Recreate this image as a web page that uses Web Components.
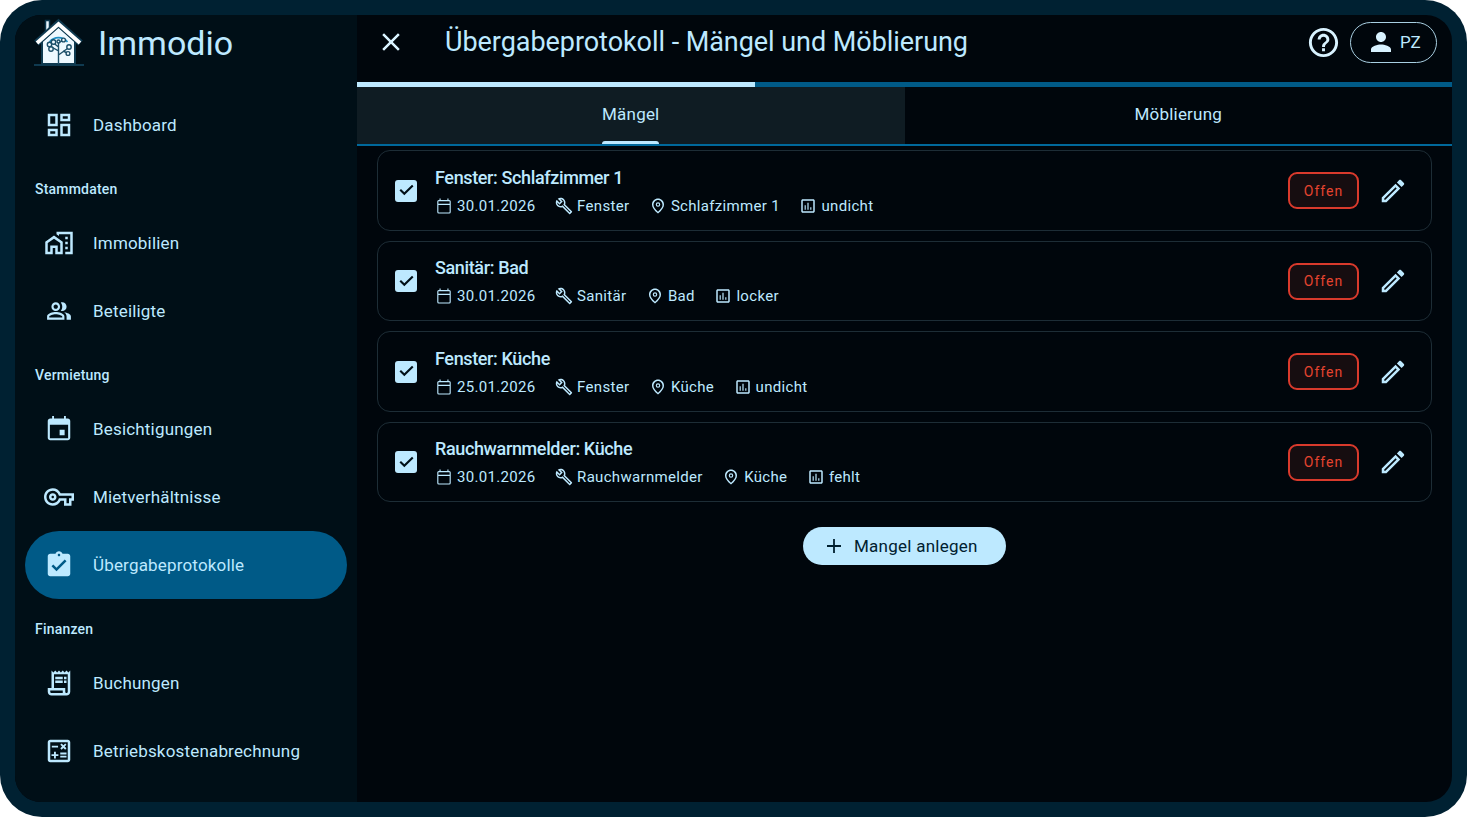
<!DOCTYPE html>
<html lang="de">
<head>
<meta charset="utf-8">
<title>Immodio</title>
<style>
  html, body { margin: 0; height: 100%; background: #fff; }
  body { font-family: Roboto, "Liberation Sans", sans-serif; overflow: hidden; }
</style>
</head>
<body>
<im-app>
  <im-sidebar slot="side">
    <im-nav icon="dashboard">Dashboard</im-nav>
    <im-section>Stammdaten</im-section>
    <im-nav icon="home_work">Immobilien</im-nav>
    <im-nav icon="people" icon-size="26">Beteiligte</im-nav>
    <im-section>Vermietung</im-section>
    <im-nav icon="event">Besichtigungen</im-nav>
    <im-nav icon="key">Mietverhältnisse</im-nav>
    <im-nav icon="assignment" active>Übergabeprotokolle</im-nav>
    <im-section>Finanzen</im-section>
    <im-nav icon="receipt">Buchungen</im-nav>
    <im-nav icon="calculate">Betriebskostenabrechnung</im-nav>
  </im-sidebar>
  <im-topbar>Übergabeprotokoll - Mängel und Möblierung</im-topbar>
  <im-progress value="36.36"></im-progress>
  <im-tabs></im-tabs>
  <im-list>
    <im-card title="Fenster: Schlafzimmer 1" date="30.01.2026" trade="Fenster" room="Schlafzimmer 1" state="undicht"></im-card>
    <im-card title="Sanitär: Bad" date="30.01.2026" trade="Sanitär" room="Bad" state="locker"></im-card>
    <im-card title="Fenster: Küche" date="25.01.2026" trade="Fenster" room="Küche" state="undicht"></im-card>
    <im-card title="Rauchwarnmelder: Küche" date="30.01.2026" trade="Rauchwarnmelder" room="Küche" state="fehlt"></im-card>
    <im-add-button>Mangel anlegen</im-add-button>
  </im-list>
</im-app>

<script>
// material style icons, 24 unit box
const ICONS = {
  dashboard: '<path d="M19 5v2h-4V5h4M9 5v6H5V5h4m10 8v6h-4v-6h4M9 17v2H5v-2h4M21 3h-8v6h8V3zM11 3H3v10h8V3zm10 8h-8v10h8V11zm-10 4H3v6h8v-6z"/>',
  home_work: '<path d="M17 7h2v2h-2zM17 11h2v2h-2zM17 15h2v2h-2zM1 11v10h6v-5h2v5h6V11L8 6l-7 5zm12 8h-2v-5H5v5H3v-7l5-3.5 5 3.5v7zM10 3v1.97l2 1.43V5h9v14h-4v2h6V3z"/>',
  people: '<path d="M16.67 13.13C18.04 14.06 19 15.32 19 17v3h4v-3c0-2.18-3.57-3.47-6.33-3.87zM15 12c2.21 0 4-1.79 4-4s-1.79-4-4-4c-.47 0-.91.1-1.33.24C14.5 5.27 15 6.58 15 8s-.5 2.73-1.33 3.76c.42.14.86.24 1.33.24zM9 12c2.21 0 4-1.79 4-4s-1.79-4-4-4-4 1.79-4 4 1.79 4 4 4zm0-6c1.1 0 2 .9 2 2s-.9 2-2 2-2-.9-2-2 .9-2 2-2zM9 13c-2.67 0-8 1.34-8 4v3h16v-3c0-2.66-5.33-4-8-4zm6 5H3v-.99C3.2 16.29 6.3 15 9 15s5.8 1.29 6 2v1z"/>',
  event: '<path d="M16.500 12.500h-4v4.500h4zM16 1.500v2H8v-2H6.500v2H5c-1.110 0-2 .9-2 2V19c0 1.100.89 2 2 2h14c1.100 0 2-.9 2-2V5.500c0-1.100-.9-2-2-2h-1.500v-2zm3.300 17.800H4.700V8.500h14.600z"/>',
  key: '<path d="M22 19h-6v-4h-2.68c-1.14 2.42-3.6 4-6.32 4-3.86 0-7-3.14-7-7s3.14-7 7-7c2.72 0 5.17 1.58 6.32 4H24v6h-2v4zm-4-2h2v-4h2v-2H11.94l-.23-.67C11.01 8.34 9.11 7 7 7c-2.76 0-5 2.24-5 5s2.24 5 5 5c2.11 0 4.01-1.34 4.71-3.33l.23-.67H18v4zM7 15c-1.65 0-3-1.35-3-3s1.35-3 3-3 3 1.35 3 3-1.35 3-3 3zm0-4c-.55 0-1 .45-1 1s.45 1 1 1 1-.45 1-1-.45-1-1-1z"/>',
  assignment: '<path d="M19 3h-4.18C14.4 1.84 13.3 1 12 1c-1.3 0-2.4.84-2.82 2H5c-1.1 0-2 .9-2 2v14c0 1.1.9 2 2 2h14c1.1 0 2-.9 2-2V5c0-1.1-.9-2-2-2zm-7 0c.55 0 1 .45 1 1s-.45 1-1 1-1-.45-1-1 .45-1 1-1zm-2 14l-4-4 1.41-1.41L10 14.17l6.59-6.59L18 9l-8 8z"/>',
  receipt: '<path d="M19.5 3.5 18 2l-1.5 1.5L15 2l-1.5 1.5L12 2l-1.5 1.5L9 2 7.5 3.5 6 2v14H3v3c0 1.66 1.34 3 3 3h12c1.66 0 3-1.34 3-3V2l-1.5 1.5zM15 20H6c-.55 0-1-.45-1-1v-1h10v2zm4-1c0 .55-.45 1-1 1s-1-.45-1-1v-3H8V5h11v14z"/><path d="M9 7h6v2H9zM16 7h2v2h-2zM9 10h6v2H9zM16 10h2v2h-2z"/>',
  calculate: '<path d="M19 3H5c-1.1 0-2 .9-2 2v14c0 1.1.9 2 2 2h14c1.1 0 2-.9 2-2V5c0-1.1-.9-2-2-2zm0 16H5V5h14v14z"/><path d="M6.25 7.72h5v1.5h-5zM13 15.75h5v1.5h-5zM13 13.25h5v1.5h-5zM8 18h1.5v-2h2v-1.5h-2v-2H8v2H6V16h2zM14.09 10.95l1.41-1.41 1.41 1.41 1.06-1.06-1.41-1.42 1.41-1.41L16.97 6l-1.41 1.41L14.09 6l-1.06 1.06 1.41 1.41-1.41 1.42z"/>',
  close: '<path d="M19 6.41 17.59 5 12 10.59 6.41 5 5 6.41 10.59 12 5 17.59 6.41 19 12 13.41 17.59 19 19 17.59 13.41 12z"/>',
  help: '<path d="M11 18h2v-2h-2v2zm1-16C6.48 2 2 6.48 2 12s4.48 10 10 10 10-4.48 10-10S17.52 2 12 2zm0 18c-4.41 0-8-3.59-8-8s3.59-8 8-8 8 3.59 8 8-3.59 8-8 8zm0-14c-2.21 0-4 1.79-4 4h2c0-1.1.9-2 2-2s2 .9 2 2c0 2-3 1.75-3 5h2c0-2.25 3-2.5 3-5 0-2.21-1.79-4-4-4z"/>',
  person: '<path d="M12 12c2.21 0 4-1.79 4-4s-1.79-4-4-4-4 1.79-4 4 1.79 4 4 4zm0 2c-2.67 0-8 1.34-8 4v2h16v-2c0-2.66-5.33-4-8-4z"/>',
  calendar: '<path d="M19 4h-1V2h-1.500v2h-9V2H6v2H5a2 2 0 0 0-2 2v14a2 2 0 0 0 2 2h14a2 2 0 0 0 2-2V6a2 2 0 0 0-2-2zM5 5.500h14a.5.5 0 0 1 .5.5v3h-15V6a.5.5 0 0 1 .5-.5zm14 15H5a.5.5 0 0 1-.5-.5V10.500h15V20a.5.5 0 0 1-.5.5z"/>',
  build: '<path d="m22.61 18.99-9.08-9.08c.93-2.34.45-5.1-1.44-7C9.79.61 6.21.4 3.66 2.26L7.5 6.11 6.08 7.52 2.25 3.69C.39 6.23.6 9.82 2.9 12.110c1.86 1.86 4.57 2.35 6.89 1.48l9.11 9.11c.39.39 1.02.39 1.41 0l2.3-2.3c.4-.38.4-1.01 0-1.41zm-3 1.6-9.46-9.46c-.61.45-1.29.72-2 .82-1.36.2-2.79-.21-3.83-1.25C3.37 9.76 2.93 8.5 3 7.26l3.09 3.09 4.24-4.24-3.09-3.09c1.24-.07 2.49.37 3.44 1.31 1.08 1.08 1.49 2.57 1.24 3.96-.12.71-.42 1.37-.88 1.96l9.45 9.45-.88.88z"/>',
  place: '<path d="M12 2c-4.200 0-8 3.220-8 8.200 0 3.320 2.670 7.250 8 11.800 5.330-4.550 8-8.480 8-11.800C20 5.220 16.200 2 12 2zm0 17.800c-4.050-3.700-6-6.800-6-9.140C6 6.830 8.650 4 12 4s6 2.830 6 6.660c0 2.340-1.950 5.440-6 9.140z"/><path d="M12 7a3 3 0 1 0 0 6 3 3 0 0 0 0-6zm0 4.500a1.500 1.500 0 1 1 0-3 1.500 1.500 0 0 1 0 3z"/>',
  chart: '<path d="M19 3H5c-1.100 0-2 .9-2 2v14c0 1.100.9 2 2 2h14c1.100 0 2-.9 2-2V5c0-1.100-.9-2-2-2zm0 16H5V5h14v14z"/><path d="M7.500 11H9v6H7.500zM11.200 7.500h1.600V17h-1.600zM15 13.500h1.500V17H15z"/>',
  edit: '<path d="M3 17.250V21h3.750L17.810 9.940l-3.750-3.750L3 17.250zM5.920 19H5v-.92l9.060-9.060.92.92L5.920 19zM20.710 5.630l-2.340-2.340c-.2-.2-.45-.29-.71-.29s-.51.1-.7.29l-1.830 1.830 3.750 3.750 1.830-1.830c.39-.39.39-1.020 0-1.410z"/>',
  add: '<path d="M19 12.900h-6.100V19h-1.800v-6.100H5v-1.800h6.100V5h1.800v6.100H19z"/>'
};

class ImIcon extends HTMLElement {
  connectedCallback() {
    const size = this.getAttribute("size") || 24;
    this.attachShadow({ mode: "open" }).innerHTML = `
      <style>
        :host { display: inline-flex; flex: none; width: ${size}px; height: ${size}px; }
        svg { width: 100%; height: 100%; fill: currentColor; display: block; }
      </style>
      <svg viewBox="0 0 24 24">${ICONS[this.getAttribute("name")] || ""}</svg>`;
  }
}

class ImApp extends HTMLElement {
  constructor() {
    super();
    this.attachShadow({ mode: "open" }).innerHTML = `
      <style>
        :host {
          display: block; box-sizing: border-box; width: 1467px; height: 817px;
          padding: 15px; background: #002132; border-radius: 42px;
          color: #bde9ff; font-family: Roboto, "Liberation Sans", sans-serif;
        }
        .screen {
          height: 100%; display: flex; overflow: hidden;
          border-radius: 26px; background: #00060c;
        }
        .side { flex: none; width: 342px; }
        .main { flex: 1; min-width: 0; display: flex; flex-direction: column; }
      </style>
      <div class="screen">
        <div class="side"><slot name="side"></slot></div>
        <div class="main"><slot></slot></div>
      </div>`;
  }
}

class ImSidebar extends HTMLElement {
  constructor() {
    super();
    this.attachShadow({ mode: "open" }).innerHTML = `
      <style>
        :host { display: block; height: 100%; background: #000f17; overflow: hidden; }
        .brand { height: 76px; display: flex; align-items: flex-start; gap: 14px; padding: 3px 0 0 19px; box-sizing: border-box; }
        .brand svg { flex: none; width: 50px; height: 50px; }
        .name { font-size: 34px; line-height: 34px; margin-top: 8px; color: #bde9ff; }
        nav { display: block; }
      </style>
      <div class="brand">
        <svg viewBox="0 0 50 50">
          <rect x="0" y="46" width="50" height="2" fill="#0f3a50"/>
          <path d="M11.500 2.500h4v14h-4z" fill="#eaf8ff" stroke="#0f3a50" stroke-width="1.500"/>
          <path d="M8 23v23h33V23L24.500 8z" fill="#eef9ff" stroke="#0f3a50" stroke-width="2"/>
          <path d="M2.500 25 24.500 5.500l22 19.500" fill="none" stroke="#0f3a50" stroke-width="7"/>
          <path d="M3 25 24.500 6 46 25" fill="none" stroke="#fff" stroke-width="3.800"/>
          <path d="M15.500 24a11.500 11.500 0 0 1 18 0" fill="none" stroke="#1f8fc4" stroke-width="1.600"/>
          <g fill="#eef9ff" stroke="#1c4f69" stroke-width="1.400">
            <path d="M24.500 46V33l-7-4M24.500 37l9-6.500M24.500 33v-8l4-2.500M19.500 25l5 4M29 33l4.500 2" fill="none"/>
            <circle cx="15.500" cy="26.500" r="2.200"/><circle cx="19.500" cy="24" r="2.200"/><circle cx="17" cy="31" r="2.200"/>
            <circle cx="29.500" cy="22" r="1.900"/><circle cx="35" cy="29" r="2.200"/><circle cx="34" cy="35.500" r="1.900"/>
            <circle cx="24.500" cy="23.500" r="1.500"/>
          </g>
        </svg>
        <span class="name">Immodio</span>
      </div>
      <nav><slot></slot></nav>`;
  }
}

class ImNav extends HTMLElement {
  constructor() {
    super();
    this.attachShadow({ mode: "open" });
  }
  connectedCallback() {
    const active = this.hasAttribute("active");
    const size = this.getAttribute("icon-size") || 30;
    this.shadowRoot.innerHTML = `
      <style>
        :host { display: block; height: 68px; padding: 0 10px; box-sizing: border-box; }
        .item {
          height: 100%; display: flex; align-items: center; padding-left: 19px;
          border-radius: 34px; font-size: 17px; letter-spacing: .18px; color: #bde9ff;
          background: ${active ? "#005a87" : "transparent"};
        }
        .ico { flex: none; width: 30px; margin-right: 19px; display: flex; justify-content: center; }
      </style>
      <div class="item"><span class="ico"><im-icon name="${this.getAttribute("icon")}" size="${size}"></im-icon></span><slot></slot></div>`;
  }
}

class ImSection extends HTMLElement {
  constructor() {
    super();
    this.attachShadow({ mode: "open" }).innerHTML = `
      <style>
        :host {
          display: block; height: 50px; box-sizing: border-box; padding: 20px 0 0 20px;
          font-size: 14px; line-height: 20px; font-weight: 500; letter-spacing: .2px; color: #bde9ff;
        }
      </style>
      <slot></slot>`;
  }
}

class ImTopbar extends HTMLElement {
  constructor() {
    super();
    this.attachShadow({ mode: "open" }).innerHTML = `
      <style>
        :host { display: flex; flex: none; align-items: center; height: 67px; padding: 0 15px 0 19px; color: #bde9ff; }
        im-icon { color: #d8f2ff; }
        .title { flex: 1; margin-left: 39px; font-size: 27px; letter-spacing: -.05px; margin-top: -14px; }
        .close { margin-top: -13px; }
        .help { margin-right: 9px; margin-top: -13px; }
        .user {
          display: flex; align-items: center; gap: 4px; box-sizing: border-box; width: 87px; height: 41px;
          margin-top: -13px; padding-left: 15px; border: 1.5px solid #a8cfe2; border-radius: 21px; font-size: 17px;
        }
      </style>
      <im-icon class="close" name="close" size="30"></im-icon>
      <span class="title"><slot></slot></span>
      <im-icon class="help" name="help" size="35"></im-icon>
      <div class="user"><im-icon name="person" size="30"></im-icon><span>PZ</span></div>`;
  }
}

class ImProgress extends HTMLElement {
  connectedCallback() {
    this.attachShadow({ mode: "open" }).innerHTML = `
      <style>
        :host { display: block; flex: none; height: 5px; background: #005a87; }
        div { height: 100%; width: ${this.getAttribute("value")}%; background: #bde9ff; }
      </style>
      <div></div>`;
  }
}

class ImTabs extends HTMLElement {
  constructor() {
    super();
    this.attachShadow({ mode: "open" }).innerHTML = `
      <style>
        :host {
          display: flex; flex: none; height: 58.500px; box-sizing: border-box;
          border-bottom: 2px solid #00689b; font-size: 17px; letter-spacing: .2px; color: #bde9ff;
        }
        .tab { flex: 1; display: flex; align-items: center; justify-content: center; padding-bottom: 2px; }
        .tab.on { background: #0f1c23; }
        .label { position: relative; }
        .on .label::after {
          content: ""; position: absolute; left: 0; right: 0; bottom: -20px; height: 3px;
          background: #bde9ff; border-radius: 3px 3px 0 0;
        }
      </style>
      <div class="tab on"><span class="label">Mängel</span></div>
      <div class="tab"><span class="label">Möblierung</span></div>`;
  }
}

class ImList extends HTMLElement {
  constructor() {
    super();
    this.attachShadow({ mode: "open" }).innerHTML = `
      <style>
        :host { display: flex; flex-direction: column; flex: 1; gap: 10px; padding: 4.900px 20px; }
      </style>
      <slot></slot>`;
  }
}

class ImCard extends HTMLElement {
  connectedCallback() {
    const a = (n) => this.getAttribute(n);
    this.attachShadow({ mode: "open" }).innerHTML = `
      <style>
        :host {
          display: flex; align-items: center; box-sizing: border-box; height: 80.500px;
          padding: 0 23px 0 17px; border: 1px solid #1d2d36; border-radius: 13px; color: #bde9ff;
        }
        .check {
          flex: none; width: 22px; height: 22px; border-radius: 3px; background: #bde9ff; color: #000f17;
          display: flex; align-items: center; justify-content: center;
        }
        .check svg { display: block; }
        .body { flex: 1; min-width: 0; margin-left: 18px; }
        .title { font-size: 18px; line-height: 24px; font-weight: 500; letter-spacing: -.37px; margin-bottom: 6px; }
        .meta { display: flex; align-items: center; font-size: 15px; line-height: 20px; letter-spacing: .32px; gap: 19.500px; }
        .meta span { display: flex; align-items: center; gap: 4px; }
        .badge {
          flex: none; box-sizing: border-box; width: 71px; height: 37px; margin-right: 19px;
          display: flex; align-items: center; justify-content: center;
          border: 2px solid #d93a2c; border-radius: 9px; background: #160d10;
          color: #e5442f; font-size: 14px; letter-spacing: 1px;
        }
      </style>
      <div class="check"><svg width="21" height="21" viewBox="0 0 24 24" fill="currentColor"><path d="M9.500 17.500 4 12l1.700-1.700 3.800 3.800 8.800-8.800L20 7z"/></svg></div>
      <div class="body">
        <div class="title">${a("title")}</div>
        <div class="meta">
          <span><im-icon name="calendar" size="18"></im-icon>${a("date")}</span>
          <span><im-icon name="build" size="18"></im-icon>${a("trade")}</span>
          <span><im-icon name="place" size="18"></im-icon>${a("room")}</span>
          <span><im-icon name="chart" size="18"></im-icon>${a("state")}</span>
        </div>
      </div>
      <div class="badge">Offen</div>
      <im-icon name="edit" size="30"></im-icon>`;
  }
}

class ImAddButton extends HTMLElement {
  constructor() {
    super();
    this.attachShadow({ mode: "open" }).innerHTML = `
      <style>
        :host {
          display: flex; align-items: center; align-self: center; box-sizing: border-box;
          height: 38.500px; width: 203px; margin-top: 14.600px; padding-left: 19px; gap: 8px;
          border-radius: 20px; background: #bde9ff; color: #00202f; font-size: 17px; letter-spacing: .25px;
        }
      </style>
      <im-icon name="add" size="24"></im-icon><slot></slot>`;
  }
}

customElements.define("im-icon", ImIcon);
customElements.define("im-app", ImApp);
customElements.define("im-sidebar", ImSidebar);
customElements.define("im-nav", ImNav);
customElements.define("im-section", ImSection);
customElements.define("im-topbar", ImTopbar);
customElements.define("im-progress", ImProgress);
customElements.define("im-tabs", ImTabs);
customElements.define("im-list", ImList);
customElements.define("im-card", ImCard);
customElements.define("im-add-button", ImAddButton);
</script>
</body>
</html>
